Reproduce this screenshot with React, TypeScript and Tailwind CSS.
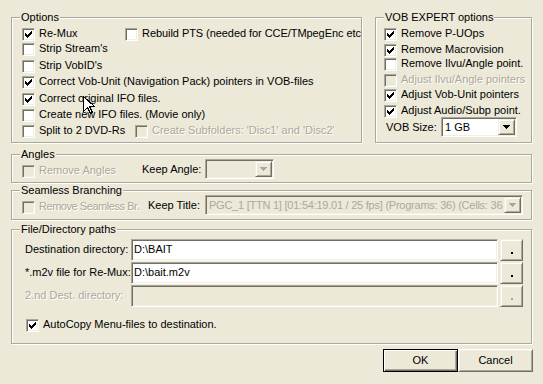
import React from "react";

const CHECK_PIXELS: [number, number][] = [
  [6, 0],
  [5, 1], [6, 1],
  [0, 2], [4, 2], [5, 2], [6, 2],
  [0, 3], [1, 3], [3, 3], [4, 3], [5, 3],
  [0, 4], [1, 4], [2, 4], [3, 4], [4, 4],
  [1, 5], [2, 5], [3, 5],
  [2, 6],
];

function Check({ checked, disabled }: { checked?: boolean; disabled?: boolean }) {
  return (
    <span
      className={`relative inline-block w-[13px] h-[13px] shrink-0 border border-t-[#ACA899] border-l-[#ACA899] border-b-white border-r-white shadow-[inset_1px_1px_0_#716F64,inset_-1px_-1px_0_#F1EFE2] ${
        disabled ? "bg-[#ECE9D8]" : "bg-white"
      }`}
    >
      {checked && (
        <svg className="absolute left-[2px] top-[2px]" width="7" height="7" shapeRendering="crispEdges">
          {CHECK_PIXELS.map(([x, y]) => (
            <rect key={`${x}-${y}`} x={x} y={y} width="1" height="1" fill={disabled ? "#ACA899" : "#000"} />
          ))}
        </svg>
      )}
    </span>
  );
}

const DIS = "text-[#ACA899] [text-shadow:1px_1px_0_#ffffff]";

function CheckRow({
  label,
  checked,
  disabled,
  className = "",
  textClass = "",
}: {
  label: string;
  checked?: boolean;
  disabled?: boolean;
  className?: string;
  textClass?: string;
}) {
  return (
    <div className={`flex items-start whitespace-nowrap ${className}`}>
      <Check checked={checked} disabled={disabled} />
      <span className={`ml-[4px] leading-[13px] -mt-[1px] ${disabled ? DIS : ""} ${textClass}`}>{label}</span>
    </div>
  );
}

function Arrow({ disabled }: { disabled?: boolean }) {
  const c = disabled ? "#ACA899" : "#000";
  return (
    <svg width="7" height="4" shapeRendering="crispEdges">
      <rect x="0" y="0" width="7" height="1" fill={c} />
      <rect x="1" y="1" width="5" height="1" fill={c} />
      <rect x="2" y="2" width="3" height="1" fill={c} />
      <rect x="3" y="3" width="1" height="1" fill={c} />
    </svg>
  );
}

function Combo({
  value,
  disabled,
  className = "",
  textClass = "",
}: {
  value: string;
  disabled?: boolean;
  className?: string;
  textClass?: string;
}) {
  return (
    <div
      className={`flex items-stretch border border-t-[#ACA899] border-l-[#ACA899] border-b-white border-r-white shadow-[inset_1px_1px_0_#716F64,inset_-1px_-1px_0_#F1EFE2] p-[1px] ${
        disabled ? "bg-[#ECE9D8]" : "bg-white"
      } ${className}`}
    >
      <div
        className={`flex-1 min-w-0 overflow-hidden whitespace-nowrap pl-[2px] flex items-center ${
          disabled ? "text-[#ACA899]" : "text-black"
        } ${textClass}`}
      >
        {value}
      </div>
      <div className="w-[17px] shrink-0 flex items-center justify-center bg-[#ECE9D8] border border-t-[#F1EFE2] border-l-[#F1EFE2] border-b-[#716F64] border-r-[#716F64] shadow-[inset_1px_1px_0_#ffffff,inset_-1px_-1px_0_#ACA899]">
        <Arrow disabled={disabled} />
      </div>
    </div>
  );
}

function Group({
  title,
  className = "",
  children,
}: {
  title: string;
  className?: string;
  children?: React.ReactNode;
}) {
  return (
    <div
      className={`relative border border-[#ACA899] shadow-[inset_1px_1px_0_#ffffff,1px_1px_0_#ffffff] ${className}`}
    >
      <span className="absolute left-[8px] -top-[7px] px-[1px] leading-[13px] bg-[#ECE9D8] whitespace-nowrap">
        {title}
      </span>
      {children}
    </div>
  );
}

function TextBox({ value, disabled }: { value?: string; disabled?: boolean }) {
  return (
    <div
      className={`w-[367px] h-[22px] border border-t-[#ACA899] border-l-[#ACA899] border-b-white border-r-white shadow-[inset_1px_1px_0_#716F64,inset_-1px_-1px_0_#F1EFE2] pl-[2px] flex items-center whitespace-nowrap ${
        disabled ? "bg-[#ECE9D8]" : "bg-white"
      }`}
    >
      {value}
    </div>
  );
}

function SmallBtn({ disabled }: { disabled?: boolean }) {
  return (
    <div className="w-[23px] h-[22px] ml-[2px] flex items-end justify-center pb-[6px] border border-t-[#F1EFE2] border-l-[#F1EFE2] border-b-[#716F64] border-r-[#716F64] shadow-[inset_1px_1px_0_#ffffff,inset_-1px_-1px_0_#ACA899]">
      <span className={`block w-[2px] h-[2px] ${disabled ? "bg-[#ACA899]" : "bg-black"}`} />
    </div>
  );
}

export default function App() {
  return (
    <div className="relative w-[543px] h-[384px] overflow-hidden bg-[#ECE9D8] text-black text-[11px] leading-[13px] font-['Liberation_Sans',Arial,sans-serif] pl-[11px] pt-[17px] select-none">
      {/* Top row */}
      <div className="flex">
        <Group title="Options" className="w-[351px] h-[126px]">
          <div className="flex flex-col pl-[10px] pt-[10px]">
            <div className="flex h-[15px] items-start">
              <CheckRow label="Re-Mux" checked className="w-[103px]" />
              <CheckRow label="Rebuild PTS (needed for CCE/TMpegEnc etc" textClass="tracking-[-0.06px]" />
            </div>
            <CheckRow label="Strip Stream's" className="h-[17px]" />
            <CheckRow label="Strip VobID's" className="h-[16px]" />
            <CheckRow
              label="Correct Vob-Unit (Navigation Pack) pointers in VOB-files"
              checked
              className="h-[17px]"
            />
            <CheckRow label="Correct original IFO files." checked className="h-[16px]" />
            <CheckRow label="Create new IFO files. (Movie only)" className="h-[16px]" />
            <div className="flex h-[16px] items-start">
              <CheckRow label="Split to 2 DVD-Rs" className="w-[113px]" />
              <CheckRow label="Create Subfolders: 'Disc1' and 'Disc2'" disabled />
            </div>
          </div>
        </Group>

        <Group title="VOB EXPERT options" className="ml-[13px] w-[157px] h-[126px]">
          <div className="flex flex-col pl-[8px] pt-[10px]">
            <CheckRow label="Remove P-UOps" checked className="h-[16px]" />
            <CheckRow label="Remove Macrovision" checked className="h-[14px]" />
            <CheckRow label="Remove Ilvu/Angle point." className="h-[16px]" />
            <CheckRow label="Adjust Ilvu/Angle pointers" disabled className="h-[15px]" />
            <CheckRow label="Adjust Vob-Unit pointers" checked className="h-[16px]" />
            <CheckRow label="Adjust Audio/Subp point." checked className="h-[12px]" />
            <div className="flex items-center">
              <span className="ml-[2px] w-[55px]">VOB Size:</span>
              <Combo value="1 GB" className="w-[76px] h-[20px]" />
            </div>
          </div>
        </Group>
      </div>

      {/* Angles */}
      <Group title="Angles" className="mt-[11px] w-[521px] h-[29px]">
        <div className="flex items-center pl-[10px] pt-[4px]">
          <CheckRow label="Remove Angles" disabled className="w-[120px] mt-[4px]" />
          <span className="w-[63px] whitespace-nowrap">Keep Angle:</span>
          <Combo value="" disabled className="w-[69px] h-[20px]" />
        </div>
      </Group>

      {/* Seamless */}
      <Group title="Seamless Branching" className="mt-[7px] w-[521px] h-[30px]">
        <div className="flex items-center pl-[10px] pt-[4px]">
          <CheckRow
            label="Remove Seamless Br."
            disabled
            className="w-[126px] mt-[4px]"
            textClass="tracking-[-0.45px]"
          />
          <span className="w-[57px] whitespace-nowrap">Keep Title:</span>
          <Combo
            value="PGC_1 [TTN 1] [01:54:19.01 / 25 fps] (Programs: 36) (Cells: 36"
            disabled
            className="w-[318px] h-[20px]"
            textClass="tracking-[-0.24px]"
          />
        </div>
      </Group>

      {/* File/Directory paths */}
      <Group title="File/Directory paths" className="mt-[9px] w-[521px] h-[115px]">
        <div className="flex flex-col pt-[8px]">
          <div className="flex items-center h-[23px]">
            <span className="w-[119px] pl-[13px] whitespace-nowrap">Destination directory:</span>
            <TextBox value="D:\BAIT" />
            <SmallBtn />
          </div>
          <div className="flex items-center h-[23px]">
            <span className="w-[119px] pl-[13px] whitespace-nowrap">*.m2v file for Re-Mux:</span>
            <TextBox value="D:\bait.m2v" />
            <SmallBtn />
          </div>
          <div className="flex items-center h-[23px]">
            <span className={`w-[119px] pl-[13px] whitespace-nowrap ${DIS}`}>2.nd Dest. directory:</span>
            <TextBox disabled />
            <SmallBtn disabled />
          </div>
          <div className="pl-[14px] mt-[12px]">
            <CheckRow label="AutoCopy Menu-files to destination." checked />
          </div>
        </div>
      </Group>

      {/* Buttons */}
      <div className="flex justify-end mt-[5px] pr-[10px]">
        <div className="w-[75px] h-[23px] flex items-center justify-center border border-black shadow-[inset_1px_1px_0_#ffffff,inset_-1px_-1px_0_#716F64,inset_-2px_-2px_0_#ACA899]">
          OK
        </div>
        <div className="w-[75px] h-[23px] flex items-center justify-center border border-t-white border-l-white border-b-[#716F64] border-r-[#716F64] shadow-[inset_1px_1px_0_#F1EFE2,inset_-1px_-1px_0_#ACA899]">
          Cancel
        </div>
      </div>

      {/* mouse cursor */}
      <svg className="absolute left-[83px] top-[96px]" width="12" height="19" shapeRendering="crispEdges">
        <path
          d="M0.5 0.5 L0.5 15.5 L4.5 11.5 L7.5 17.5 L9.5 16.5 L6.5 10.5 L11.5 10.5 Z"
          fill="#fff"
          stroke="#000"
          strokeWidth="1"
        />
      </svg>
    </div>
  );
}
